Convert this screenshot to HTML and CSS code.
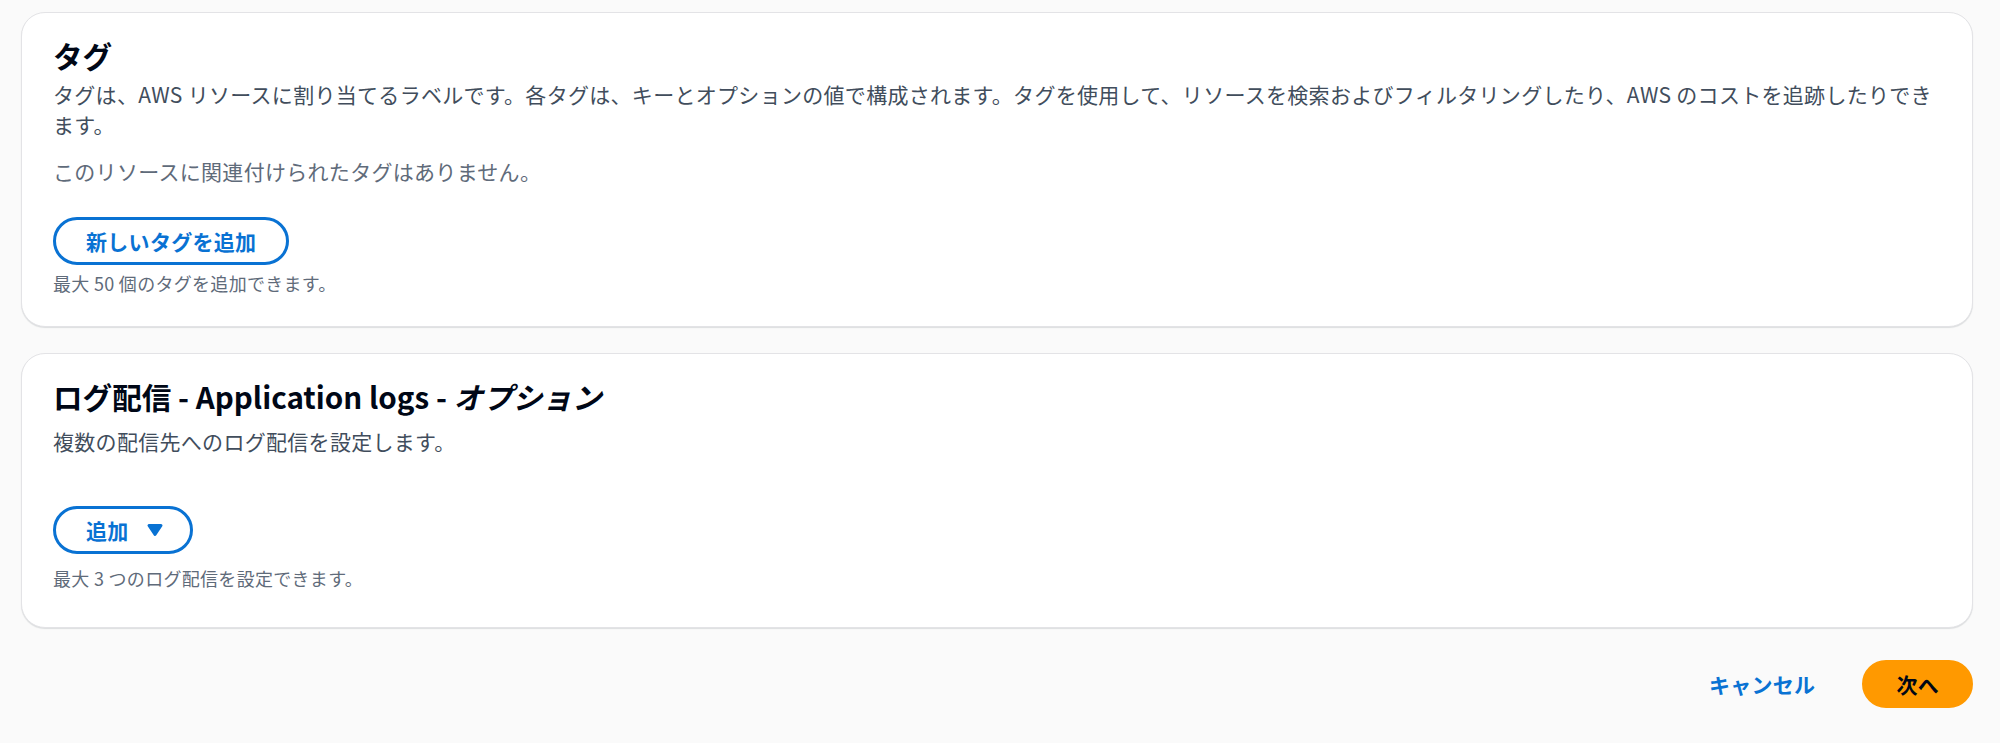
FILE: index.html
```html
<!DOCTYPE html>
<html lang="ja">
<head>
<meta charset="utf-8">
<title>タグとログ配信</title>
<link rel="stylesheet" href="styles.css">
</head>
<body>
<main class="page">
  <section class="card card-tags">
    <h2 class="card-title">タグ</h2>
    <p class="card-desc">タグは、AWS リソースに割り当てるラベルです。各タグは、キーとオプションの値で構成されます。タグを使用して、リソースを検索およびフィルタリングしたり、AWS のコストを追跡したりできます。</p>
    <p class="empty-text">このリソースに関連付けられたタグはありません。</p>
    <div class="actions">
      <button class="btn btn-normal" type="button">新しいタグを追加</button>
    </div>
    <p class="hint">最大 50 個のタグを追加できます。</p>
  </section>

  <section class="card card-logs">
    <h2 class="card-title">ログ配信 - Application logs - <i class="optional">オプション</i></h2>
    <p class="card-desc">複数の配信先へのログ配信を設定します。</p>
    <div class="actions actions-logs">
      <button class="btn btn-normal btn-dropdown" type="button">追加<svg class="caret" width="24" height="24" viewBox="0 0 16 16" aria-hidden="true"><path d="M4 5h8l-4 6-4-6z" fill="currentColor" stroke="currentColor" stroke-width="2" stroke-linejoin="round"/></svg></button>
    </div>
    <p class="hint">最大 3 つのログ配信を設定できます。</p>
  </section>

  <div class="footer">
    <button class="btn btn-link" type="button">キャンセル</button>
    <button class="btn btn-primary" type="button">次へ</button>
  </div>
</main>
</body>
</html>
```

FILE: styles.css
```css
* {
  box-sizing: border-box;
}

html, body {
  margin: 0;
  padding: 0;
  background: #fafafa;
}

body {
  font-family: "Noto Sans CJK JP", "Noto Sans", sans-serif;
  color: #000716;
  font-size: 21px;
  line-height: 30px;
  letter-spacing: 0.3px;
}

.page {
  display: flex;
  flex-direction: column;
  gap: 26px;
  padding: 12px 27px 35px 21px;
}

.card {
  background: #ffffff;
  border: 1px solid #e3e3e6;
  border-radius: 24px;
  box-shadow: 0 1px 1px rgba(0, 28, 36, 0.12);
  padding: 25px 33px 31px 31px;
}

.card-logs {
  padding-bottom: 37px;
}

.card-title {
  margin: 0;
  font-size: 29.6px;
  line-height: 36px;
  font-weight: 700;
  letter-spacing: 0;
  color: #000716;
}

.optional {
  font-style: italic;
}

.card-desc {
  margin: 5px 0 0;
  color: #414d5c;
}

.card-logs .card-desc {
  margin-top: 11px;
}

.empty-text {
  margin: 17px 0 0;
  color: #5f6b7a;
}

.actions {
  margin-top: 31px;
  display: flex;
}

.actions-logs {
  margin-top: 50px;
}

.hint {
  margin: 6px 0 0;
  font-size: 18px;
  line-height: 24px;
  color: #5f6b7a;
}

.card-logs .hint {
  margin-top: 12px;
}

.btn {
  font-family: inherit;
  font-size: 21px;
  line-height: 30px;
  font-weight: 700;
  letter-spacing: 0.3px;
  border-radius: 30px;
  border: 3px solid transparent;
  padding: 6px 30px;
  background: transparent;
  display: inline-flex;
  align-items: center;
  cursor: pointer;
}

.btn-normal {
  border-color: #0972d3;
  color: #0972d3;
  background: #ffffff;
}

.btn-dropdown {
  padding-right: 23px;
}

.caret {
  margin-left: 14px;
  display: block;
}

.footer {
  display: flex;
  justify-content: flex-end;
  align-items: center;
  gap: 14px;
  margin-top: 6px;
}

.btn-link {
  color: #0972d3;
}

.btn-primary {
  background: #ff9900;
  border-color: #ff9900;
  color: #000716;
  padding: 6px 31px;
}
```
